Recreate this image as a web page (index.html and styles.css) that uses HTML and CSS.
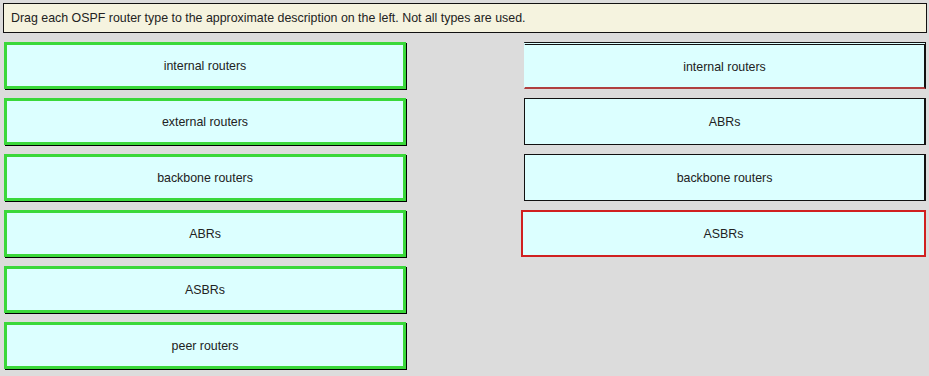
FILE: index.html
```html
<!DOCTYPE html>
<html lang="en">
<head>
    <meta charset="UTF-8">
    <title>OSPF Router Types</title>
    <link rel="stylesheet" href="styles.css">
</head>
<body>

    <div class="prompt">Drag each OSPF router type to the approximate description on the left. Not all types are used.</div>

    <div class="board">
        <!-- Left column: answer slots -->
        <div class="column">
            <div class="item placed">internal routers</div>
            <div class="item placed">external routers</div>
            <div class="item placed">backbone routers</div>
            <div class="item placed">ABRs</div>
            <div class="item placed">ASBRs</div>
            <div class="item placed">peer routers</div>
        </div>

        <!-- Right column: draggable options -->
        <div class="column">
            <div class="item option top-edge">internal routers</div>
            <div class="item option">ABRs</div>
            <div class="item option">backbone routers</div>
            <div class="item option wrong">ASBRs</div>
        </div>
    </div>

</body>
</html>
```

FILE: styles.css
```css
* {
    margin: 0;
    padding: 0;
    box-sizing: border-box;
}

body {
    font-family: 'Liberation Sans', Arial, sans-serif;
    font-size: 12.4px;
    color: #222;
    background-color: #dcdcdc;
    padding: 3px 3px 0 3px;
    height: 376px;
    overflow: hidden;
}

.prompt {
    width: 924px;
    height: 30px;
    line-height: 28px;
    padding-left: 7px;
    background-color: #f5f3df;
    border: 1px solid #111;
    font-size: 12.4px;
}

.board {
    display: flex;
    gap: 118px;
    padding: 9px 0 0 1px;
}

.column {
    display: flex;
    flex-direction: column;
    gap: 9px;
    width: 402px;
}

.item {
    height: 47px;
    line-height: 42px;
    text-align: center;
    background-color: #dcffff;
}

.placed {
    border: 3px solid #3ad83a;
    box-shadow: 1px 1px 0 #000;
    width: 402px;
}

.option {
    border: 1px solid #111;
    border-right-width: 2px;
    line-height: 47px;
}

.top-edge {
    border-top: 3px double #111;
    border-left-color: #dcffff;
    border-bottom: 2px solid #b04040;
    line-height: 44px;
}

.wrong {
    border: 2px solid #d02020;
    margin-left: -3px;
    width: 405px;
    line-height: 44px;
}
```
